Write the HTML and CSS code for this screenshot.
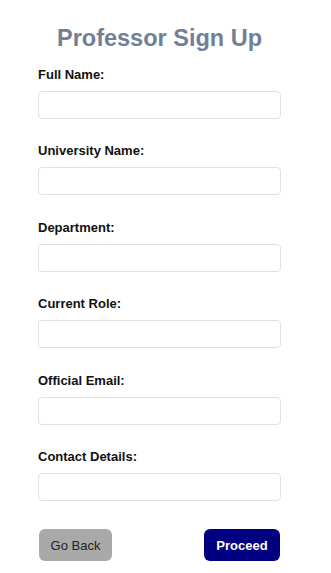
FILE: index.html
```html
<!DOCTYPE html>
<html lang="en">
<head>
<meta charset="utf-8">
<title>Professor Sign Up</title>
<link rel="stylesheet" href="styles.css">
</head>
<body>
<main class="page">
  <h1 class="title">Professor Sign Up</h1>
  <form class="form">
    <div class="field"><label class="label">Full Name:</label><input class="input" type="text"></div>
    <div class="field"><label class="label">University Name:</label><input class="input" type="text"></div>
    <div class="field"><label class="label">Department:</label><input class="input" type="text"></div>
    <div class="field"><label class="label">Current Role:</label><input class="input" type="text"></div>
    <div class="field"><label class="label">Official Email:</label><input class="input" type="email"></div>
    <div class="field"><label class="label">Contact Details:</label><input class="input" type="text"></div>
    <div class="actions">
      <button type="button" class="btn btn-back">Go Back</button>
      <button type="button" class="btn btn-proceed">Proceed</button>
    </div>
  </form>
</main>
</body>
</html>
```
FILE: styles.css
```css
* { box-sizing: border-box; }
html, body { margin: 0; padding: 0; background: #ffffff; }
body {
  font-family: "Liberation Sans", Arial, sans-serif;
  color: #111111;
  width: 331px;
}
.page {
  width: 319px;
  padding: 24px 38px 0 38px;
}
.title {
  margin: 0 0 15px 0;
  font-size: 23.5px;
  line-height: 28px;
  font-weight: 700;
  color: #718096;
  text-align: center;
}
.form {
  display: flex;
  flex-direction: column;
  gap: 24.4px;
}
.field {
  display: flex;
  flex-direction: column;
  gap: 8px;
}
.label {
  font-size: 13px;
  line-height: 16px;
  font-weight: 700;
  color: #111111;
}
.input {
  width: 243px;
  height: 28px;
  border: 1px solid #e1e1e1;
  border-radius: 4px;
  background: #ffffff;
  padding: 0 8px;
  font: inherit;
}
.actions {
  display: flex;
  justify-content: space-between;
  padding: 4px 1px 0 1px;
}
.btn {
  height: 32px;
  border: none;
  border-radius: 6px;
  font-family: "Liberation Sans", Arial, sans-serif;
  font-size: 13px;
  padding: 0;
  white-space: nowrap;
  text-align: center;
}
.btn-back {
  width: 73px;
  background: #a9a9a9;
  color: #222222;
  font-weight: 400;
}
.btn-proceed {
  width: 76px;
  background: #000080;
  color: #ffffff;
  font-weight: 700;
}
```
